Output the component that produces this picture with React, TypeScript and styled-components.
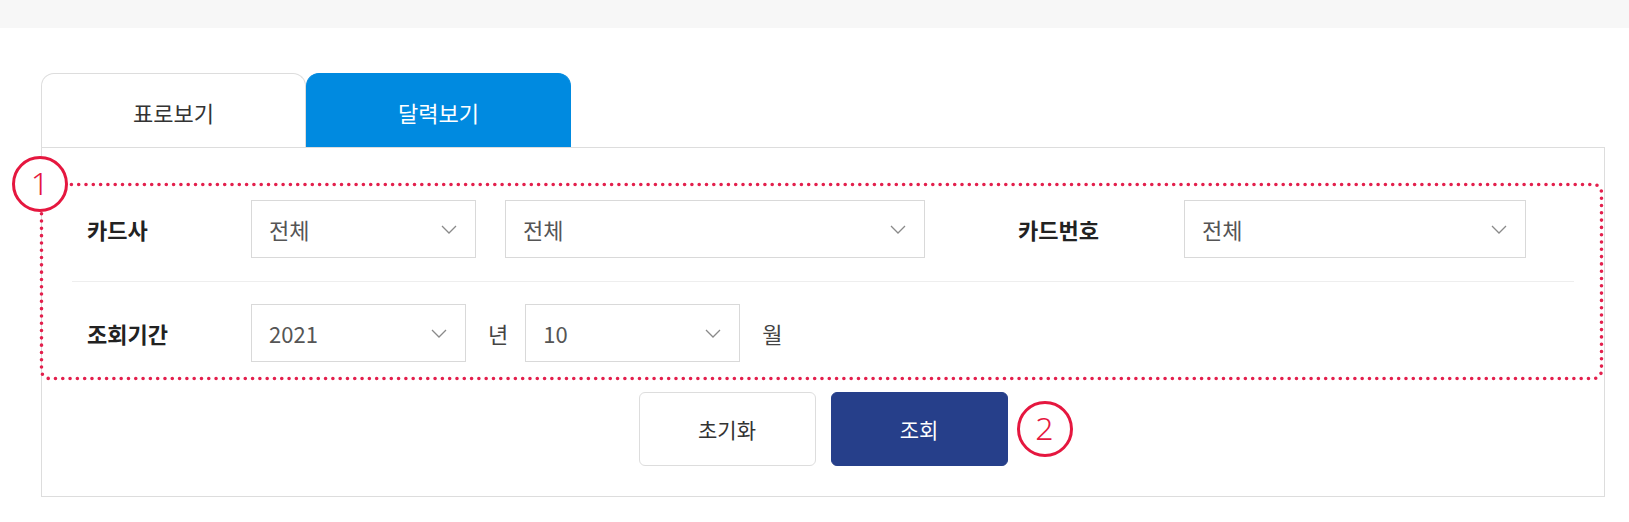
import React from "react";
import styled, { createGlobalStyle } from "styled-components";

const GlobalStyle = createGlobalStyle`
  * { box-sizing: border-box; }
  body {
    margin: 0;
    background: #ffffff;
    font-family: "Noto Sans CJK KR", "Noto Sans", sans-serif;
    color: #333;
  }
`;

const TopBar = styled.div`
  height: 28px;
  background: #f7f7f7;
`;

const Content = styled.div`
  width: 1564px;
  margin: 45px 0 0 41px;
`;

const Tabs = styled.div`
  display: flex;
  height: 74px;
`;

const Tab = styled.div<{ $active?: boolean }>`
  width: 265px;
  display: flex;
  align-items: center;
  justify-content: center;
  padding-top: 3px;
  font-size: 22px;
  line-height: 1;
  border-radius: 13px 13px 0 0;
  background: ${(p) => (p.$active ? "#008ae0" : "#ffffff")};
  color: ${(p) => (p.$active ? "#ffffff" : "#333333")};
  border: 1px solid ${(p) => (p.$active ? "#008ae0" : "#dddddd")};
  border-bottom: none;
`;

const Panel = styled.div`
  border: 1px solid #dddddd;
  padding: 36px 0 30px;
`;

const Form = styled.div`
  position: relative;
`;

const Annotation = styled.svg`
  position: absolute;
  top: -1px;
  left: -2px;
  width: calc(100% + 1px);
  height: calc(100% + 1px);
  overflow: visible;
  pointer-events: none;
`;

const DottedRect = styled.rect`
  x: 1.5px;
  y: 1.5px;
  width: calc(100% - 3px);
  height: calc(100% - 3px);
  rx: 8px;
  fill: none;
  stroke: #e3204d;
  stroke-width: 3.6;
  stroke-dasharray: 0 7.3;
  stroke-linecap: round;
`;

const Badge = styled.div`
  position: absolute;
  width: 56px;
  height: 56px;
  border: 3px solid #e5173f;
  border-radius: 50%;
  background: #ffffff;
  color: #e5173f;
  font-family: "Noto Sans", "DejaVu Sans", sans-serif;
  font-weight: 300;
  font-size: 32px;
  line-height: 1;
  display: flex;
  align-items: center;
  justify-content: center;
  padding-bottom: 2px;
`;

const FormBadge = styled(Badge)`
  top: -28px;
  left: -30px;
`;

const ActionBadge = styled(Badge)`
  top: 50%;
  left: calc(100% + 9px);
  transform: translateY(-50%);
`;

const Row = styled.div<{ $first?: boolean }>`
  display: flex;
  align-items: center;
  margin: 0 30px;
  padding: ${(p) => (p.$first ? "16px 0 23px 15px" : "22px 0 18px 15px")};
  border-bottom: ${(p) => (p.$first ? "1px solid #eeeeee" : "none")};
`;

const Label = styled.div<{ $w: number; $ml?: number }>`
  width: ${(p) => p.$w}px;
  margin-left: ${(p) => p.$ml ?? 0}px;
  flex-shrink: 0;
  font-size: 22px;
  font-weight: 700;
  color: #222222;
  line-height: 1;
`;

const Select = styled.div<{ $w: number; $ml?: number }>`
  width: ${(p) => p.$w}px;
  margin-left: ${(p) => p.$ml ?? 0}px;
  height: 58px;
  flex-shrink: 0;
  border: 1px solid #d9d9d9;
  background: #ffffff;
  display: flex;
  align-items: center;
  justify-content: space-between;
  padding: 0 18px 0 17px;
  font-size: 22px;
  color: #555555;
  line-height: 1;
`;

const Unit = styled.span`
  margin: 0 17px 0 22px;
  font-size: 22px;
  color: #444444;
  line-height: 1;
`;

const Chevron = styled.svg`
  width: 16px;
  height: 9px;
  flex-shrink: 0;
`;

const Buttons = styled.div`
  display: flex;
  justify-content: center;
  gap: 15px;
  margin-top: 12px;
`;

const ActionWrap = styled.div`
  position: relative;
`;

const Button = styled.button<{ $primary?: boolean }>`
  width: 177px;
  height: 74px;
  border-radius: 6px;
  font-family: inherit;
  font-size: 21px;
  line-height: 1;
  cursor: pointer;
  background: ${(p) => (p.$primary ? "#263f8a" : "#ffffff")};
  color: ${(p) => (p.$primary ? "#ffffff" : "#333333")};
  border: 1px solid ${(p) => (p.$primary ? "#263f8a" : "#dddddd")};
`;

const Arrow = () => (
  <Chevron viewBox="0 0 16 9">
    <path d="M1 1 L8 8 L15 1" fill="none" stroke="#8a8a8a" strokeWidth="1.3" />
  </Chevron>
);

const Dropdown = ({ value, w, ml }: { value: string; w: number; ml?: number }) => (
  <Select $w={w} $ml={ml}>
    <span>{value}</span>
    <Arrow />
  </Select>
);

export default function App() {
  return (
    <>
      <GlobalStyle />
      <TopBar />
      <Content>
        <Tabs>
          <Tab>표로보기</Tab>
          <Tab $active>달력보기</Tab>
        </Tabs>
        <Panel>
          <Form>
            <Row $first>
              <Label $w={164}>카드사</Label>
              <Dropdown value="전체" w={225} />
              <Dropdown value="전체" w={420} ml={29} />
              <Label $w={166} $ml={93}>카드번호</Label>
              <Dropdown value="전체" w={342} />
            </Row>
            <Row>
              <Label $w={164}>조회기간</Label>
              <Dropdown value="2021" w={215} />
              <Unit>년</Unit>
              <Dropdown value="10" w={215} />
              <Unit>월</Unit>
            </Row>
            <Annotation>
              <DottedRect />
            </Annotation>
            <FormBadge>1</FormBadge>
          </Form>
          <Buttons>
            <Button>초기화</Button>
            <ActionWrap>
              <Button $primary>조회</Button>
              <ActionBadge>2</ActionBadge>
            </ActionWrap>
          </Buttons>
        </Panel>
      </Content>
    </>
  );
}
